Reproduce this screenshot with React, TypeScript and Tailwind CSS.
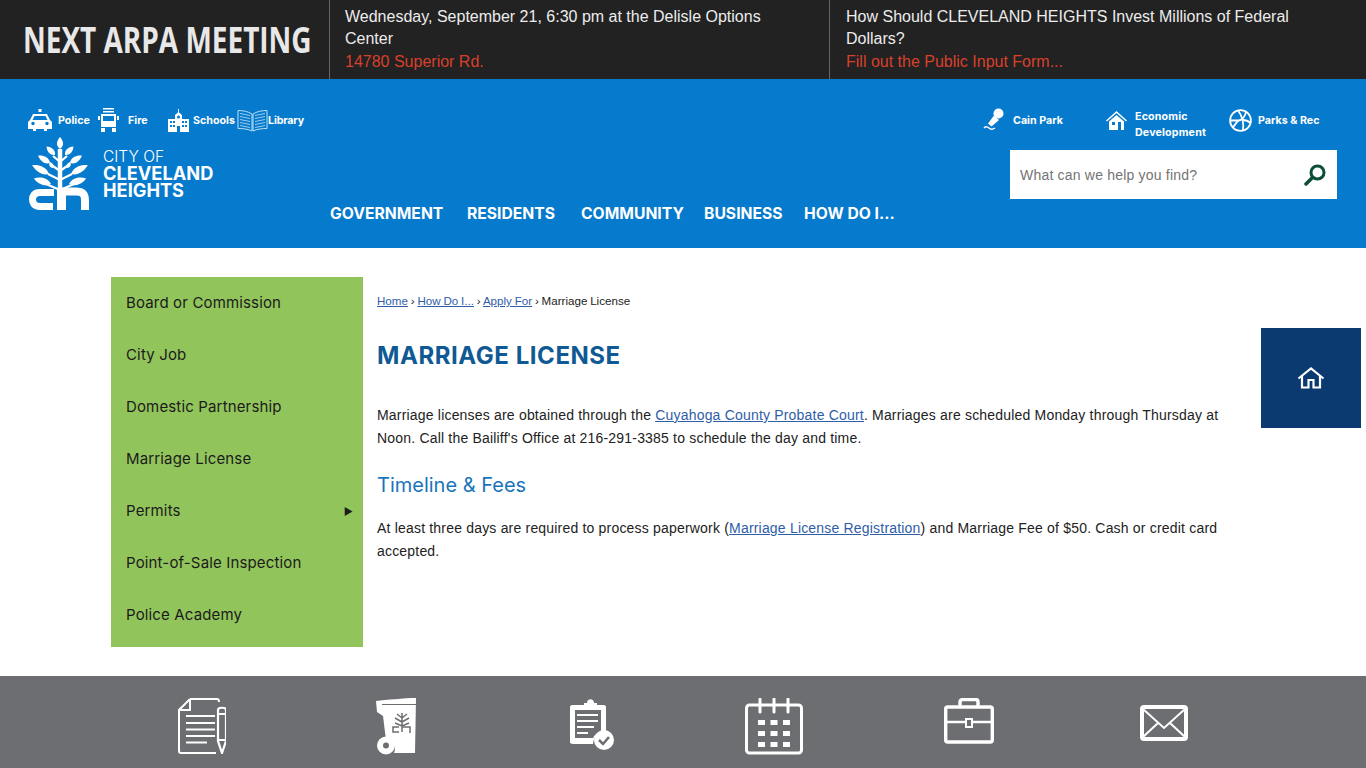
const sans = "font-['Liberation_Sans',Arial,sans-serif]";
const display = "font-['Inter','Open_Sans',sans-serif]";

function PoliceIcon() {
  return (
    <svg width="24" height="23" viewBox="0 0 24 23" fill="#fff">
      <rect x="10.500" y="0" width="3" height="3" />
      <path d="M5 5h14l3 6 2 2v7h-5v2h-3v-2H8v2H5v-2H0v-7l2-2zM6.500 7l-2 4h15l-2-4z" fillRule="evenodd" />
      <circle cx="5" cy="14.500" r="1.700" fill="#067acc" />
      <circle cx="19" cy="14.500" r="1.700" fill="#067acc" />
    </svg>
  );
}

function FireIcon() {
  return (
    <svg width="21" height="24" viewBox="0 0 21 24" fill="#fff">
      <rect x="5" y="0" width="11" height="1.500" />
      <rect x="5" y="3" width="11" height="1.500" />
      <path d="M3 6h15v13H3zM5 8v5h11V8z" fillRule="evenodd" />
      <rect x="0" y="8" width="2" height="4" />
      <rect x="19" y="8" width="2" height="4" />
      <rect x="3" y="20" width="4" height="4" />
      <rect x="14" y="20" width="4" height="4" />
    </svg>
  );
}

function SchoolIcon() {
  return (
    <svg width="21" height="23" viewBox="0 0 21 23" fill="#fff">
      <rect x="10" y="0" width="1" height="4" />
      <path d="M10.500 3l3.500 3v4h7v13H0V10h7V6z" />
      <g fill="#067acc">
        <rect x="2" y="12" width="2" height="2" />
        <rect x="5" y="12" width="2" height="2" />
        <rect x="14" y="12" width="2" height="2" />
        <rect x="17" y="12" width="2" height="2" />
        <rect x="2" y="16" width="2" height="2" />
        <rect x="5" y="16" width="2" height="2" />
        <rect x="14" y="16" width="2" height="2" />
        <rect x="17" y="16" width="2" height="2" />
        <rect x="9" y="17" width="3" height="6" />
        <circle cx="10.500" cy="8" r="1.500" />
      </g>
    </svg>
  );
}

function BookIcon() {
  return (
    <svg width="31" height="23" viewBox="0 0 31 23" fill="none" stroke="#bfe0f5" strokeWidth="1">
      <path d="M1 1.500c5 0 10 1 14 3.500v17C11 20 6 19.500 1 19.500z" />
      <path d="M30 1.500c-5 0-10 1-14 3.500v17c4-2 9-2.500 14-2.500z" />
      <path d="M3 4.500l10 2M3 7.500l10 2M3 10.500l10 2M3 13.500l10 2M3 16.500l10 2M28 4.500l-10 2M28 7.500l-10 2M28 10.500l-10 2M28 13.500l-10 2M28 16.500l-10 2" strokeWidth=".8" />
    </svg>
  );
}

function MicIcon() {
  return (
    <svg width="22" height="24" viewBox="0 0 22 24" fill="#fff">
      <circle cx="15.500" cy="5.500" r="5" />
      <path d="M11 7.500l5 4.500-7.500 6.500-3.500-3z" />
      <path d="M1 20c2-2 4-1 5 0s3 2 6 0" fill="none" stroke="#fff" strokeWidth="1.500" />
    </svg>
  );
}

function HouseIcon() {
  return (
    <svg width="21" height="19" viewBox="0 0 21 19" fill="#fff">
      <path d="M10.500 0L21 9.500l-1 1-9.500-8.500L1 10.500l-1-1z" />
      <path d="M10.500 4L18 10.500V19H3v-8.500zM6 11v3h3v-3zM12 11v8h3v-8z" fillRule="evenodd" />
    </svg>
  );
}

function BallIcon() {
  return (
    <svg width="23" height="23" viewBox="0 0 23 23" fill="none" stroke="#fff" strokeWidth="1.800">
      <circle cx="11.500" cy="11.500" r="10.400" />
      <path d="M1.500 11.500h8c3 0 7-4 7.500-9" />
      <path d="M9 1.500c4 5 6 12 5 20" />
      <path d="M4 18.500c2-3 4-6 5.500-7M13.500 11c3 0 6 1 8 3" />
    </svg>
  );
}

// one leaf drawn upward from its base at 0,0
function Leaf({ x, y, len, wide, rot }: { x: number; y: number; len: number; wide: number; rot: number }) {
  return (
    <path
      d={`M0 0C${-wide} ${-len * 0.3} ${-wide * 0.6} ${-len * 0.75} 0 ${-len}C${wide * 0.6} ${-len * 0.75} ${wide} ${-len * 0.3} 0 0z`}
      transform={`translate(${x} ${y}) rotate(${rot})`}
    />
  );
}

function Logo() {
  const pairs = [
    { dx: 5, y: 18, len: 12, wide: 4.500, rot: 45 },
    { dx: 10, y: 26, len: 14, wide: 5, rot: 58 },
    { dx: 7, y: 31, len: 7, wide: 3, rot: 30 },
    { dx: 11, y: 37, len: 19, wide: 5.500, rot: 62 },
    { dx: 9, y: 47, len: 18, wide: 5.500, rot: 72 },
  ];
  return (
    <svg width="60" height="73" viewBox="0 0 60 73" fill="#fff">
      <Leaf x={31} y={12} len={12} wide={5} rot={0} />
      {pairs.map(p => (
        <g key={p.y}>
          <Leaf x={31 - p.dx} y={p.y} len={p.len} wide={p.wide} rot={-p.rot} />
          <Leaf x={31 + p.dx} y={p.y} len={p.len} wide={p.wide} rot={p.rot} />
        </g>
      ))}
      <path d="M31 12v45" stroke="#fff" strokeWidth="4.500" />
      <path d="M31 25l-7-6M31 25l7-6M31 34l-10-7M31 34l10-7M31 43l-12-6M31 43l12-6M31 53l-14-6M31 53l14-6" stroke="#fff" strokeWidth="2.200" fill="none" />
      <path d="M25 55.500H11C5 55.500 3.500 59 3.500 62.500S5 69.500 11 69.500h13" stroke="#fff" strokeWidth="7" fill="none" />
      <path d="M32 54.500h15c8 0 9 4 9 9V73" stroke="#fff" strokeWidth="8" fill="none" />
      <path d="M32.500 52v21" stroke="#fff" strokeWidth="9" />
    </svg>
  );
}

function SearchIcon() {
  return (
    <svg width="22" height="22" viewBox="0 0 22 22" fill="none" stroke="#0c4d38">
      <circle cx="13.500" cy="8.500" r="6.500" strokeWidth="3" />
      <path d="M8.500 13.500L2 20" strokeWidth="3.500" strokeLinecap="round" />
    </svg>
  );
}

function HomeTabIcon() {
  return (
    <svg width="28" height="22" viewBox="0 0 28 22" fill="none" stroke="#fff" strokeWidth="2.200">
      <path d="M1.500 11.500L14 1.500l12.500 10" />
      <path d="M5 9v11.500h6.500V13h5v7.500H23V9" />
    </svg>
  );
}

function DocIcon() {
  return (
    <svg width="48" height="56" viewBox="0 0 48 56" fill="none" stroke="#fff" strokeWidth="2">
      <path d="M12 1h27c1 0 2 1 2 3M12 1L1 12v41c0 1 1 2 2 2h35" />
      <path d="M12 1v11H1" />
      <path d="M8 18h29M8 25h29M8 31.500h29M8 38h29M8 44.500h21" strokeWidth="1.800" />
      <path d="M40 12c0-3 8-3 8 0v31l-4 12-4-12z" strokeWidth="2.200" />
      <path d="M40 16h8M40 42h8" strokeWidth="1.800" />
    </svg>
  );
}

function BinIcon() {
  return (
    <svg width="42" height="57" viewBox="0 0 42 57" fill="#fff">
      <path d="M1 3c10-1 28-3 40-3l-1 55H19c2-5 1-9-3-12-2-1-4-1-5-1L8 18 2 14z" />
      <path d="M7 6.500h34" stroke="#6d6e72" strokeWidth="1.200" />
      <circle cx="11" cy="47.500" r="9" />
      <circle cx="11" cy="47.500" r="3" fill="#6d6e72" />
      <g stroke="#6d6e72" strokeWidth="1.500" fill="none">
        <path d="M27 15v19M27 20l-5-4M27 20l5-4M27 24l-7-4M27 24l7-4M27 28l-7-3M27 28l7-3" />
        <path d="M24 29h-6v5h6M27 29h8v6" />
      </g>
    </svg>
  );
}

function ClipboardIcon() {
  return (
    <svg width="44" height="52" viewBox="0 0 44 52" fill="#fff">
      <path d="M14 5h3c0-5 7-5 7 0h3v2h7c1 0 2 1 2 2v25h-2c-6 0-10 4-11 12H3c-2 0-3-1-3-2V9c0-1 1-2 2-2h12z" />
      <path d="M5 12h26v22c-4 1-7 3-8 6H5z" fill="#6d6e72" />
      <path d="M7 17h21M7 23h21M7 29h17M7 35h11" stroke="#fff" strokeWidth="2" />
      <circle cx="34" cy="42" r="10" />
      <path d="M29 42l4 4 6-7" stroke="#6d6e72" strokeWidth="2.500" fill="none" />
    </svg>
  );
}

function CalendarIcon() {
  const cells = [0, 1, 2];
  return (
    <svg width="58" height="57" viewBox="0 0 58 57" fill="none" stroke="#fff">
      <rect x="1.500" y="7" width="55" height="48" rx="3" strokeWidth="3" />
      <path d="M15 1v13M29 1v13M43 1v13" strokeWidth="3" strokeLinecap="round" />
      {cells.map(r =>
        cells.map(c => (
          <rect key={`${r}-${c}`} x={13 + c * 12.500} y={22 + r * 11} width="7" height="5" fill="#fff" stroke="none" />
        ))
      )}
    </svg>
  );
}

function BriefcaseIcon() {
  return (
    <svg width="50" height="46" viewBox="0 0 50 46" fill="none" stroke="#fff" strokeWidth="3.400">
      <rect x="1.700" y="9" width="46.600" height="35" rx="2" />
      <path d="M16 9V4c0-1.500 1-2.500 2.500-2.500h13C33 1.500 34 2.500 34 4v5" />
      <path d="M1.500 24h20M28.500 24H48.500" strokeWidth="2.500" />
      <rect x="22" y="21" width="6" height="8" strokeWidth="2" />
    </svg>
  );
}

function MailIcon() {
  return (
    <svg width="48" height="36" viewBox="0 0 48 36" fill="none" stroke="#fff">
      <rect x="2" y="2" width="44" height="32" rx="2" strokeWidth="4" />
      <path d="M3 4l21 19L45 4M3 32l15-14M45 32L30 18" strokeWidth="2" />
    </svg>
  );
}

function QuickLink({ icon, label, className }: { icon: React.ReactNode; label: React.ReactNode; className: string }) {
  return (
    <a className={`flex items-center text-[10.700px] font-bold leading-4 text-white ${display} ${className}`}>
      {icon}
      <span className="pt-[2px]">{label}</span>
    </a>
  );
}

const navItems = [
  { label: "GOVERNMENT", className: "w-[137px]" },
  { label: "RESIDENTS", className: "w-[114px]" },
  { label: "COMMUNITY", className: "w-[123px]" },
  { label: "BUSINESS", className: "w-[100px]" },
  { label: "HOW DO I...", className: "" },
];

const sideItems = [
  "Board or Commission",
  "City Job",
  "Domestic Partnership",
  "Marriage License",
  "Permits",
  "Point-of-Sale Inspection",
  "Police Academy",
];

export default function App() {
  return (
    <div className={`relative h-[768px] overflow-hidden bg-white ${sans}`}>
      {/* alert bar */}
      <div className="flex h-[79px] bg-[#222222] text-base leading-[22.500px] text-[#ececec]">
        <div className="flex w-[330px] items-center border-r border-[#666] pl-[23px] pt-[1px]">
          <span className="origin-left scale-x-[0.777] whitespace-nowrap font-['Open_Sans',sans-serif] text-[36px] font-bold leading-none text-[#e8e8e8]">
            NEXT ARPA MEETING
          </span>
        </div>
        <div className="w-[500px] border-r border-[#666] pl-[15px] pr-8 pt-[5.500px]">
          <p>Wednesday, September 21, 6:30 pm at the Delisle Options Center</p>
          <p className="text-[#d8402c]">14780 Superior Rd.</p>
        </div>
        <div className="flex-1 pl-[16px] pr-[60px] pt-[5.500px]">
          <p>How Should CLEVELAND HEIGHTS Invest Millions of Federal Dollars?</p>
          <p className="text-[#d8402c]">Fill out the Public Input Form...</p>
        </div>
      </div>

      {/* header */}
      <header className="flex h-[169px] bg-[#067acc]">
        <div className="w-[330px] shrink-0 pl-[28px] pt-[29px]">
          <div className="flex h-[24px] items-center">
            <QuickLink className="w-[70px] gap-[6px]" icon={<PoliceIcon />} label="Police" />
            <QuickLink className="w-[70px] gap-[9px]" icon={<FireIcon />} label="Fire" />
            <QuickLink className="w-[69px] gap-[4px]" icon={<SchoolIcon />} label="Schools" />
            <QuickLink className="tracking-[-0.15px]" icon={<BookIcon />} label="Library" />
          </div>
          <div className="mt-[5px] flex items-start gap-[14px] pl-[1px]">
            <Logo />
            <div className={`pt-[11px] text-white ${display}`}>
              <div className="text-[15.500px] font-light leading-[17px]">CITY OF</div>
              <div className="text-[18.200px] font-bold leading-[17px]">CLEVELAND</div>
              <div className="text-[18.200px] font-bold leading-[17px]">HEIGHTS</div>
            </div>
          </div>
        </div>

        <nav className={`flex flex-1 items-start whitespace-nowrap pt-[125px] text-[15.700px] font-bold leading-[20px] text-white ${display}`}>
          {navItems.map(item => (
            <a key={item.label} className={item.className}>
              {item.label}
            </a>
          ))}
        </nav>

        <div className="mr-[29px] w-[327px] shrink-0 pt-[29px]">
          <div className="flex h-[24px] items-center">
            <QuickLink className="-ml-[27px] w-[123px] gap-[8px]" icon={<MicIcon />} label="Cain Park" />
            <QuickLink
              className="w-[123px] gap-[8px] tracking-[0.15px]"
              icon={<HouseIcon />}
              label={
                <span className="mt-[8px] block">
                  Economic
                  <br />
                  Development
                </span>
              }
            />
            <QuickLink className="gap-[6px]" icon={<BallIcon />} label="Parks & Rec" />
          </div>
          <div className="mt-[18px] flex h-[49px] items-center justify-between bg-white pl-[10px] pr-[11px]">
            <span className="text-sm tracking-[0.2px] text-[#757575]">What can we help you find?</span>
            <SearchIcon />
          </div>
        </div>
      </header>

      {/* main */}
      <main className="flex h-[428px] pl-[111px] pt-[29px]">
        <ul className={`h-[370px] w-[252px] shrink-0 bg-[#92c45c] pb-[2px] pl-[15px] pr-[10px] text-[15px] font-normal tracking-[0.15px] text-[#1b1b1b] ${display}`}>
          {sideItems.map(item => (
            <li key={item} className="flex h-[52px] items-center justify-between">
              {item}
              {item === "Permits" && <span className="text-[10px]">▶</span>}
            </li>
          ))}
        </ul>

        <div className="w-[860px] pl-[14px] pt-[17px] text-sm leading-[23px] tracking-[0.19px] text-[#222]">
          <div className="text-[11.600px] leading-[14px] tracking-normal [word-spacing:-0.4px]">
            <a className="text-[#2f5da8] underline">Home</a> › <a className="text-[#2f5da8] underline">How Do I...</a> ›{" "}
            <a className="text-[#2f5da8] underline">Apply For</a> › Marriage License
          </div>
          <h1 className={`mt-[33px] text-[24px] font-bold leading-[30px] tracking-[0.55px] text-[#0f5a94] ${display}`}>MARRIAGE LICENSE</h1>
          <p className="mt-[33px]">
            Marriage licenses are obtained through the <a className="text-[#2f5da8] underline">Cuyahoga County Probate Court</a>. Marriages are
            scheduled Monday through Thursday at Noon. Call the Bailiff's Office at 216-291-3385 to schedule the day and time.
          </p>
          <h2 className={`mt-[21px] text-[20px] font-normal leading-[28px] tracking-normal text-[#1a75bb] ${display}`}>Timeline &amp; Fees</h2>
          <p className="mt-[18px]">
            At least three days are required to process paperwork (<a className="text-[#2f5da8] underline">Marriage License Registration</a>) and
            Marriage Fee of $50. Cash or credit card accepted.
          </p>
        </div>
      </main>

      {/* side tab */}
      <a className="absolute left-[1261px] top-[328px] flex h-[100px] w-[100px] items-center justify-center bg-[#0b3a70]">
        <HomeTabIcon />
      </a>

      {/* footer icons */}
      <footer className="h-[92px] bg-[#6d6e72]">
        <div className="flex pl-[178px] pt-[22px]">
          <div className="w-[197px]"><DocIcon /></div>
          <div className="w-[195px]"><BinIcon /></div>
          <div className="w-[175px]"><ClipboardIcon /></div>
          <div className="w-[199px]"><CalendarIcon /></div>
          <div className="w-[196px]"><BriefcaseIcon /></div>
          <div className="pt-[7px]"><MailIcon /></div>
        </div>
      </footer>
    </div>
  );
}
